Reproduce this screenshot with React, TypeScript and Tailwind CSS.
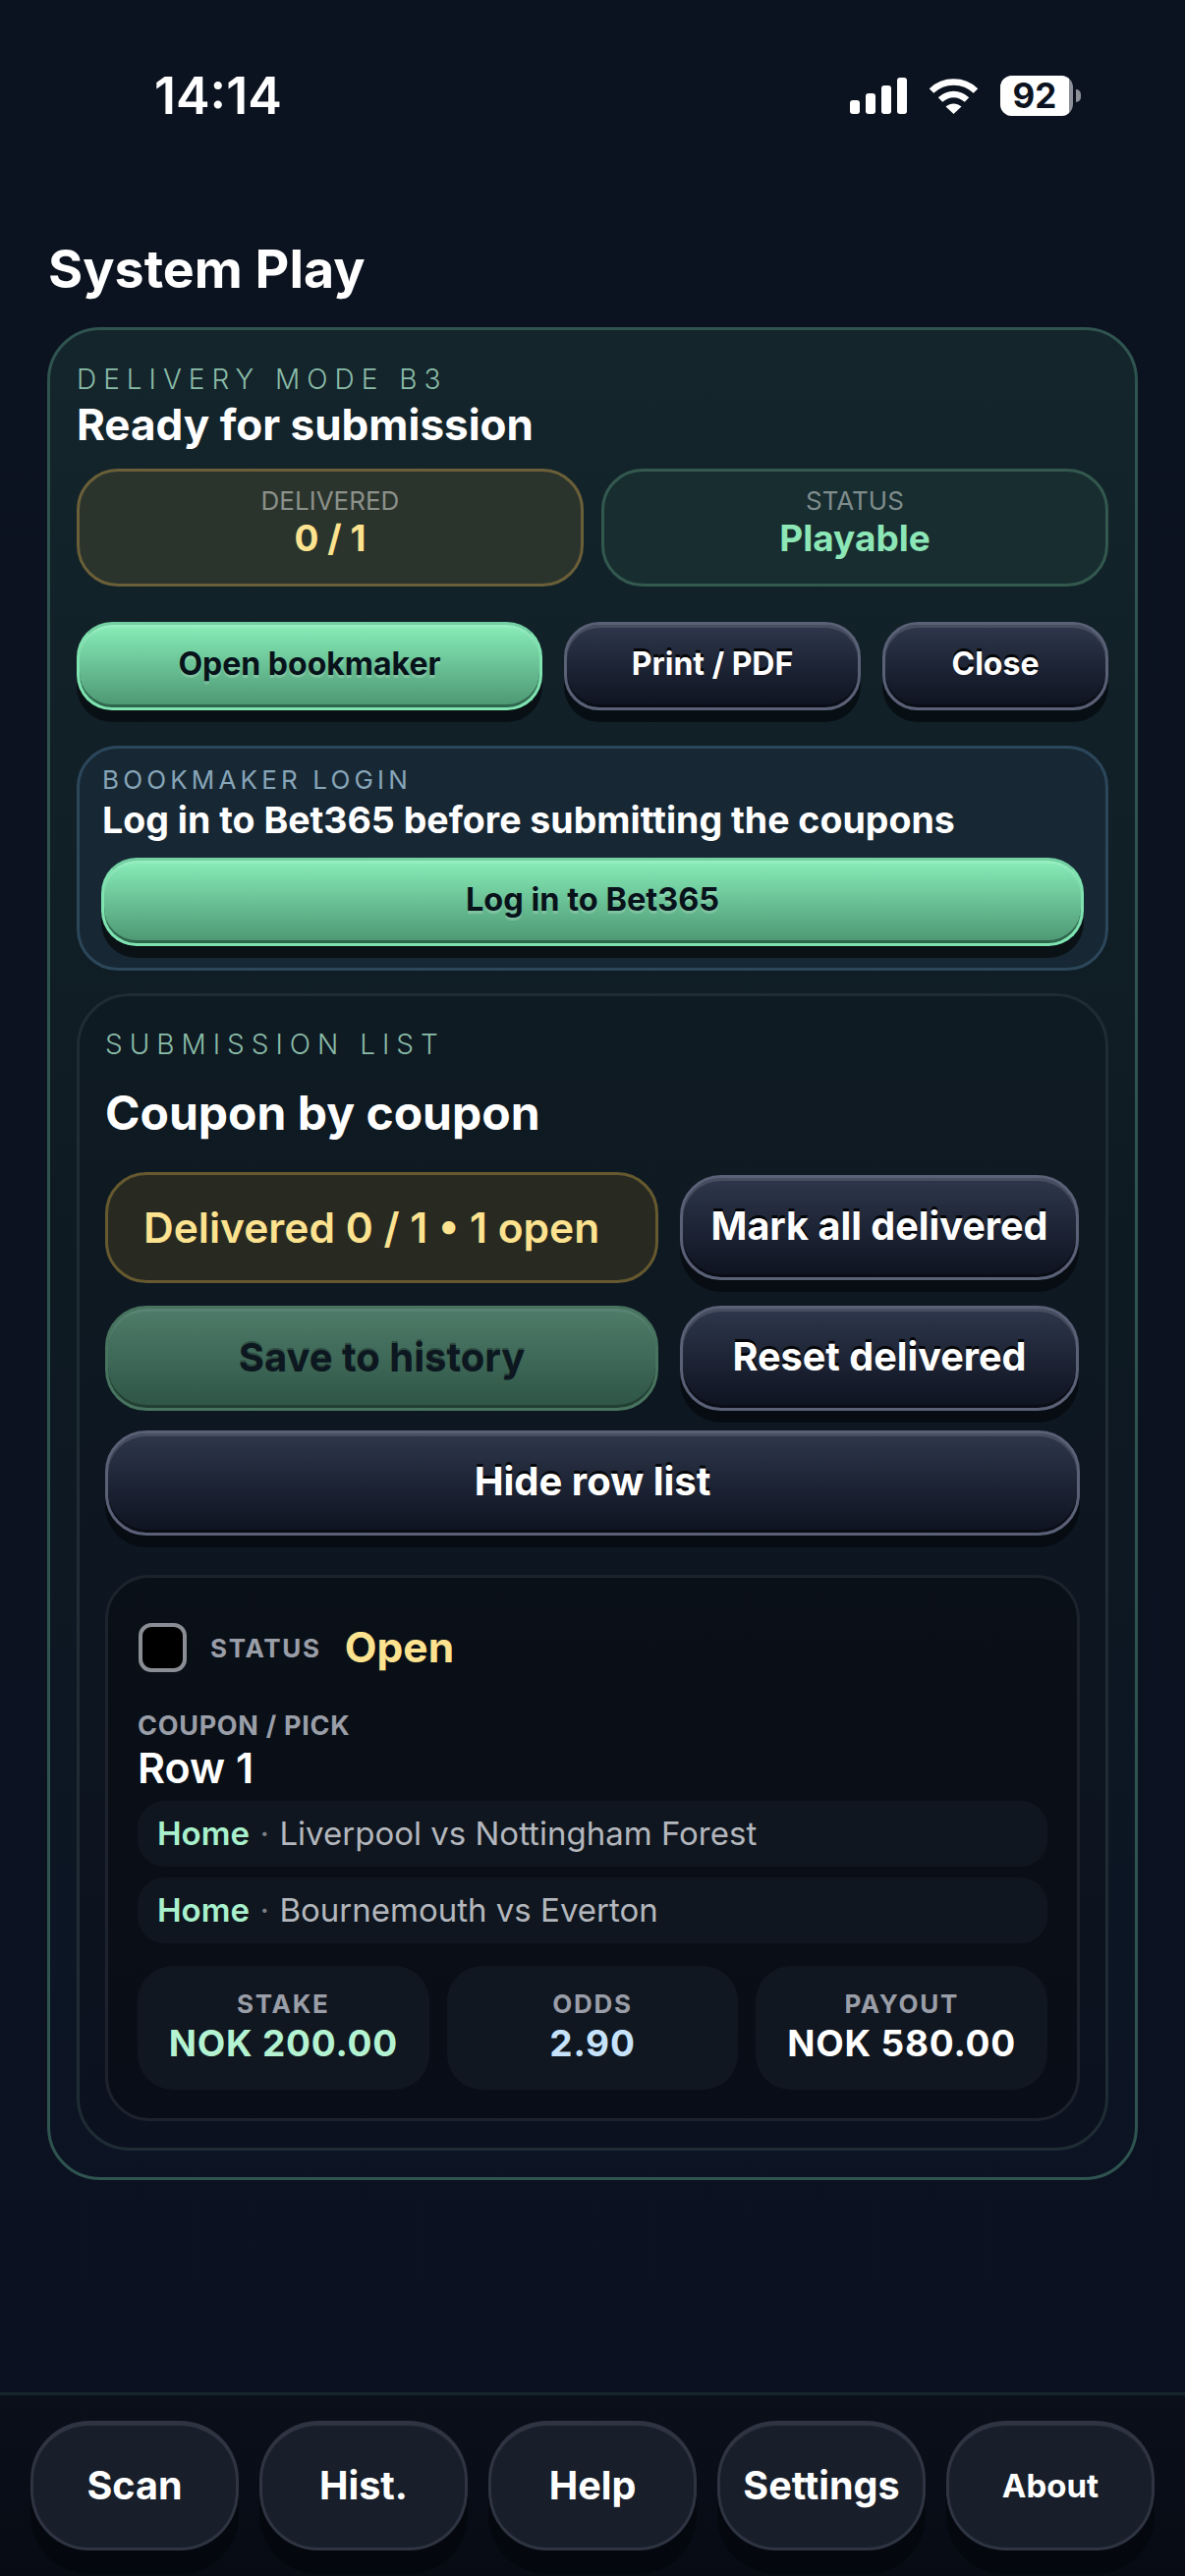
const sans = "font-['Inter','Liberation_Sans',sans-serif]";

const greenBtn =
  "flex items-center justify-center border-[3px] border-[#7fe3b0] border-t-[#74cfa3] bg-gradient-to-b from-[#88edb9] to-[#4c9672] text-[#07121a] font-bold [text-shadow:0_3px_0_rgba(255,255,255,0.2)] shadow-[inset_0_3px_0_rgba(255,255,255,0.12),inset_0_-3px_0_rgba(20,60,45,0.55),0_12px_0_rgba(8,14,18,0.85)]";

const darkBtn =
  "flex items-center justify-center border-[3px] border-[#5a6177] bg-gradient-to-b from-[#2e374c] to-[#0e1320] text-white font-bold [text-shadow:0_-3px_0_rgba(0,0,0,0.85)] shadow-[inset_0_3px_0_rgba(255,255,255,0.12),inset_0_-3px_0_rgba(0,0,0,0.35),0_12px_0_rgba(6,10,14,0.75)]";

function Signal() {
  return (
    <div className="flex items-end gap-[6px] h-[37px]">
      <div className="w-[10px] h-[14px] rounded-[3px] bg-white" />
      <div className="w-[10px] h-[21px] rounded-[3px] bg-white" />
      <div className="w-[10px] h-[29px] rounded-[3px] bg-white" />
      <div className="w-[10px] h-[37px] rounded-[3px] bg-white" />
    </div>
  );
}

function Wifi() {
  return (
    <svg width="51" height="37" viewBox="0 0 51 37" fill="none">
      <path d="M3 13.5C15.5 1.5 35.5 1.5 48 13.5" stroke="white" strokeWidth="6.5" />
      <path d="M12 22.5C20 15 31 15 39 22.5" stroke="white" strokeWidth="6.5" />
      <path d="M17.5 29.5C22.5 25.5 28.5 25.5 33.5 29.5L25.5 37Z" fill="white" />
    </svg>
  );
}

function Battery() {
  return (
    <div className="flex items-center gap-[3px]">
      <div className="w-[74px] h-[41px] rounded-[12px] bg-[#8d9096] overflow-hidden">
        <div className="w-[70px] h-full bg-white flex items-center justify-center text-[#0c1320] text-[35px] font-bold leading-none">
          92
        </div>
      </div>
      <div className="w-[5px] h-[13px] rounded-r-full bg-[#8d9096]" />
    </div>
  );
}

function PickRow({ teams }: { teams: string }) {
  return (
    <div className="h-[67px] rounded-[27px] bg-[#10161f] flex items-center pl-[20px] text-[33px] text-[#b3b7bd]">
      <span className="font-semibold text-[#a9f1cd]">Home</span>
      <span className="mx-[10.5px] text-[#7b8087]">·</span>
      <span>{teams}</span>
    </div>
  );
}

function StatBox({ label, value, color }: { label: string; value: string; color: string }) {
  return (
    <div className="h-[126px] rounded-[36px] bg-[#111720] flex flex-col items-center pt-[23px]">
      <div className="text-[26px] leading-[32px] font-bold tracking-[1.7px] text-[#9a9ea8]">{label}</div>
      <div className={`text-[37px] leading-[48px] font-bold tracking-[0.8px] ${color}`}>{value}</div>
    </div>
  );
}

const navItems = [
  { label: "Scan", size: "text-[39.5px]" },
  { label: "Hist.", size: "text-[39.5px]" },
  { label: "Help", size: "text-[39.5px]" },
  { label: "Settings", size: "text-[39.5px]" },
  { label: "About", size: "text-[33px]" },
];

export default function App() {
  return (
    <div className={`${sans} w-[1206px] h-[2622px] overflow-hidden flex flex-col bg-gradient-to-b from-[#0c1320] to-[#0b1120] text-white`}>
      {/* status bar */}
      <div className="h-[130px] shrink-0 flex items-start justify-between pl-[157px] pr-[106px] pt-[75px]">
        <div className="text-[52px] leading-[46px] font-semibold">14:14</div>
        <div className="flex items-center gap-[22px] mt-[2px]">
          <Signal />
          <Wifi />
          <Battery />
        </div>
      </div>

      <h1 className="h-[203px] shrink-0 pl-[49px] pt-[114px] text-[53.75px] leading-[60px] font-bold">System Play</h1>

      {/* main card */}
      <div className="w-[1110px] ml-[48px] shrink-0 rounded-[54px] border-[3px] border-[#2f5450] bg-gradient-to-b from-[#14252c] via-[#0e1a22] to-[#0c1424] px-[27px] pt-[32px] pb-[27px]">
        <div className="text-[28px] leading-[36px] tracking-[7px] font-light text-[#8abca8]">DELIVERY MODE B3</div>
        <div className="mt-[2px] text-[44px] leading-[52px] font-bold">Ready for submission</div>

        <div className="mt-[19px] grid grid-cols-2 gap-[18px]">
          <div className="h-[120px] rounded-[42px] border-[3px] border-[#6a5f38] bg-[#2b342c] flex flex-col items-center pt-[14px]">
            <div className="text-[26px] leading-[32px] text-[#8b918b]">DELIVERED</div>
            <div className="text-[37px] leading-[44px] font-bold text-[#fde28f]">0 / 1</div>
          </div>
          <div className="h-[120px] rounded-[42px] border-[3px] border-[#33594f] bg-[#182d30] flex flex-col items-center pt-[14px]">
            <div className="text-[26px] leading-[32px] text-[#7f8c8c]">STATUS</div>
            <div className="text-[37px] leading-[44px] font-bold text-[#8ce6b6]">Playable</div>
          </div>
        </div>

        <div className="mt-[36px] flex gap-[22px]">
          <div className={`${greenBtn} w-[474px] h-[90px] pb-[4px] rounded-[36px] text-[32px]`}>Open bookmaker</div>
          <div className={`${darkBtn} w-[302px] h-[90px] pb-[4px] rounded-[36px] text-[32px]`}>Print / PDF</div>
          <div className={`${darkBtn} w-[230px] h-[90px] pb-[4px] rounded-[36px] text-[32px]`}>Close</div>
        </div>

        {/* bookmaker login */}
        <div className="mt-[36px] h-[229px] rounded-[42px] border-[3px] border-[#2c465a] bg-[#172834] px-[22px] pt-[17px]">
          <div className="pl-[1px] text-[26px] leading-[30px] tracking-[4.15px] text-[#87a5b8]">BOOKMAKER LOGIN</div>
          <div className="pl-[1px] mt-[3px] text-[37.5px] leading-[46px] font-bold">Log in to Bet365 before submitting the coupons</div>
          <div className={`${greenBtn} mt-[15px] h-[90px] pb-[3px] rounded-[36px] text-[32.5px]`}>Log in to Bet365</div>
        </div>

        {/* submission list */}
        <div className="mt-[23px] h-[1178px] rounded-[54px] border-[3px] border-[#1f2c34] bg-gradient-to-b from-[#0f1b23] to-[#0b111e] px-[26px] pt-[31px]">
          <div className="text-[28px] leading-[36px] tracking-[7px] font-light text-[#8abca8]">SUBMISSION LIST</div>
          <div className="mt-[23px] text-[48px] leading-[58px] font-bold">Coupon by coupon</div>

          <div className="mt-[31px] grid grid-cols-[563px_406px] gap-x-[22px] items-center">
            <div className="h-[113px] rounded-[42px] border-[3px] border-[#66592f] bg-[#282a22] flex items-center pl-[36px] text-[42.5px] font-semibold text-[#fde28f]">
              Delivered 0 / 1 • 1 open
            </div>
            <div className={`${darkBtn} h-[107px] pb-[1px] rounded-[42px] text-[39.6px]`}>Mark all delivered</div>
          </div>
          <div className="mt-[23px] grid grid-cols-[563px_406px] gap-x-[22px]">
            <div className="h-[107px] pb-[1px] rounded-[42px] border-[3px] border-[#47735f] bg-gradient-to-b from-[#4f7c6a] to-[#2e5546] flex items-center justify-center text-[40px] font-bold text-[#0c1720] [text-shadow:0_-2px_0_rgba(0,0,0,0.3)] shadow-[inset_0_3px_0_rgba(255,255,255,0.06),inset_0_-3px_0_rgba(20,40,30,0.5)]">
              Save to history
            </div>
            <div className={`${darkBtn} h-[107px] pb-[1px] rounded-[42px] text-[39.6px]`}>Reset delivered</div>
          </div>
          <div className={`${darkBtn} mt-[20px] h-[107px] pb-[4px] rounded-[42px] text-[40px]`}>Hide row list</div>

          {/* coupon */}
          <div className="mt-[40px] h-[556px] rounded-[45px] border-[3px] border-[#1c232d] bg-gradient-to-b from-[#0a1017] to-[#090d17] px-[30px] pt-[46px]">
            <div className="flex items-center h-[50px]">
              <div className="w-[49px] h-[50px] ml-[1px] rounded-[13px] border-[4px] border-[#8a8d93] bg-black" />
              <div className="ml-[24px] text-[26px] font-bold tracking-[1.7px] text-[#9a9ea8]">STATUS</div>
              <div className="ml-[24px] text-[42.5px] font-bold text-[#fde28f]">Open</div>
            </div>
            <div className="mt-[39px] text-[27px] leading-[32px] font-bold tracking-[0.7px] text-[#9a9ea8]">COUPON / PICK</div>
            <div className="text-[43px] leading-[50px] font-semibold mt-[1px]">Row 1</div>
            <div className="mt-[9px] flex flex-col gap-[11px]">
              <PickRow teams="Liverpool vs Nottingham Forest" />
              <PickRow teams="Bournemouth vs Everton" />
            </div>
            <div className="mt-[23px] grid grid-cols-3 gap-[18px]">
              <StatBox label="STAKE" value="NOK 200.00" color="text-[#b4f3d2]" />
              <StatBox label="ODDS" value="2.90" color="text-[#c6e3fb]" />
              <StatBox label="PAYOUT" value="NOK 580.00" color="text-white" />
            </div>
          </div>
        </div>
      </div>

      {/* bottom nav */}
      <div className="mt-auto h-[187px] shrink-0 border-t-[3px] border-[#15262b] bg-gradient-to-b from-[#0a0f1a] to-[#070b14] flex gap-[21px] pl-[31px] pt-[26px]">
        {navItems.map((item) => (
          <div
            key={item.label}
            className={`w-[212px] h-[132px] rounded-[60px] border-[3px] border-[#2e3441] border-t-[5px] bg-[#181f2b] flex items-center justify-center font-bold shadow-[0_24px_0_rgba(3,6,10,0.6)] ${item.size}`}
          >
            {item.label}
          </div>
        ))}
      </div>
    </div>
  );
}
